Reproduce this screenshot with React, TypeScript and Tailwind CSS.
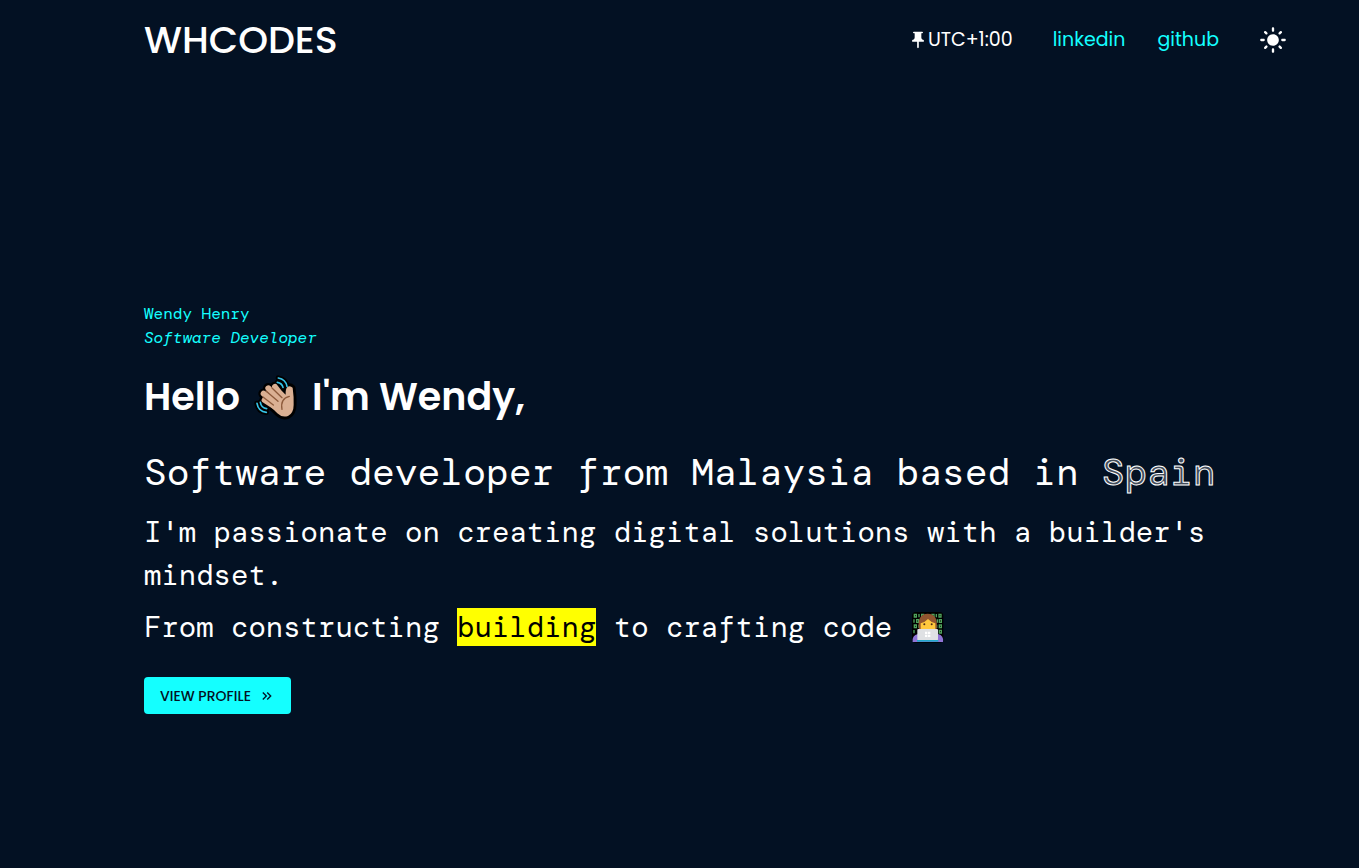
import type { ReactNode } from "react";
import { MdKeyboardDoubleArrowRight, MdLightMode, MdPushPin } from "react-icons/md";

function WavingHand() {
  const fingers = "M96 82 63 39M86 92 43 43M82 100 29 59M82 110 32 78";
  const palm =
    "M62 62 78 48Q88 54 95 62Q94 46 100 39Q108 33 116 41Q120 70 119 92Q119 117 102 126Q84 132 70 118L44 92Z";
  const waves = "M70 25Q84 27 87 40M73 12Q95 16 99 37M19 85Q22 102 38 104M9 88Q13 113 37 115";
  return (
    <svg
      role="img"
      aria-label="waving hand"
      viewBox="0 0 132 138"
      className="h-[46px] w-11"
      fill="none"
      strokeLinecap="round"
      strokeLinejoin="round"
    >
      <g stroke="#000">
        <path d={fingers} strokeWidth="32" />
        <path d={palm} strokeWidth="17" fill="#000" />
        <path d={waves} strokeWidth="16" />
      </g>
      <path d={fingers} stroke="#dbb093" strokeWidth="18" />
      <path d={palm} fill="#dbb093" />
      <path
        d="M54 42 84 71M36 51 72 82M27 69 58 93M106 67Q78 74 84 106"
        stroke="#8d5a3b"
        strokeWidth="4"
      />
      <path d={waves} stroke="#35c3e8" strokeWidth="5" />
    </svg>
  );
}

function Technologist() {
  return (
    <svg
      role="img"
      aria-label="technologist"
      viewBox="0 0 108 108"
      className="inline-block size-9 align-text-bottom"
    >
      <rect x="6" y="6" width="94" height="92" rx="12" fill="#000" />
      <g stroke="#4fa35c" strokeWidth="4" fill="none">
        <path d="M13 13h6v8h-6zM27 12v10M35 13h6v8h-6zM66 13h6v8h-6zM79 12v10M87 13h6v8h-6z" />
        <path d="M12 28v10M20 29h6v8h-6zM82 28v10M88 29h6v8h-6z" />
        <path d="M13 45h6v8h-6zM27 44v10M80 44v10M88 45h6v8h-6z" />
        <path d="M12 60v10M82 60v10M88 61h6v8h-6z" />
      </g>
      <path d="M8 96Q5 76 24 72H84Q102 76 99 96Z" fill="#8f74d6" />
      <path d="M28 64Q18 12 53 11Q88 12 79 64Z" fill="#91552f" />
      <path d="M32 40Q46 36 54 27Q62 36 76 40V62H32Z" fill="#ffc83d" />
      <circle cx="43" cy="43" r="3" fill="#4b2d19" />
      <circle cx="65" cy="43" r="3" fill="#4b2d19" />
      <rect x="22" y="57" width="62" height="34" rx="3" fill="#dfe1e4" />
      <path d="M45 65h7v7h-7zM54 65h7v7h-7zM45 74h7v7h-7zM54 74h7v7h-7z" fill="#fff" />
      <path d="M21 90h64v5H21z" fill="#22a7c9" />
    </svg>
  );
}

function NavLink({ href, children }: { href: string; children: ReactNode }) {
  return (
    <a href={href} className="text-[#14ffff] hover:underline">
      {children}
    </a>
  );
}

export default function App() {
  return (
    <div className="min-h-screen bg-[#031123] font-['Poppins','Inter',sans-serif] text-white">
      <header className="flex h-20 items-center justify-between pr-[72px] pl-36">
        <span className="pb-0.5 text-[38px] font-medium">WHCODES</span>
        <nav className="flex items-center gap-8 text-[19px]">
          <span className="mr-2 flex items-center">
            <MdPushPin className="size-5" aria-hidden="true" />
            UTC+1:00
          </span>
          <NavLink href="#linkedin">linkedin</NavLink>
          <NavLink href="#github">github</NavLink>
          <button type="button" aria-label="Toggle light mode" className="ml-2 cursor-pointer">
            <MdLightMode className="size-7" aria-hidden="true" />
          </button>
        </nav>
      </header>

      <main className="pt-[222px] pr-[72px] pb-16 pl-36 font-['DM_Mono','Liberation_Mono',monospace]">
        <div className="text-base text-[#14ffff]">
          <p>Wendy Henry</p>
          <p className="italic">Software Developer</p>
        </div>
        <h1 className="mt-4 flex items-center font-['Poppins','Inter',sans-serif] text-[38px] leading-[62px] font-semibold">
          Hello
          <span className="mx-3.5">
            <WavingHand />
          </span>
          I'm Wendy,
        </h1>
        <h2 className="mt-3.5 text-[38px] leading-[60px]">
          Software developer from Malaysia based in{" "}
          <span className="text-white/25 [-webkit-text-stroke:1px_#fff]">Spain</span>
        </h2>
        <p className="mt-[9px] text-[29px] leading-[43px]">
          I'm passionate on creating digital solutions with a builder's mindset.
        </p>
        <p className="mt-[9px] text-[29px] leading-[43px]">
          From constructing{" "}
          <mark className="inline-block bg-[#ffff00] leading-[38px] text-black">building</mark> to
          crafting code <Technologist />
        </p>
        <button
          type="button"
          className="mt-7 flex h-[37px] cursor-pointer items-center gap-2 rounded bg-[#14ffff] px-4 font-['Poppins','Inter',sans-serif] text-sm font-medium text-[#031123]"
        >
          VIEW PROFILE
          <MdKeyboardDoubleArrowRight className="size-4" aria-hidden="true" />
        </button>
      </main>
    </div>
  );
}
